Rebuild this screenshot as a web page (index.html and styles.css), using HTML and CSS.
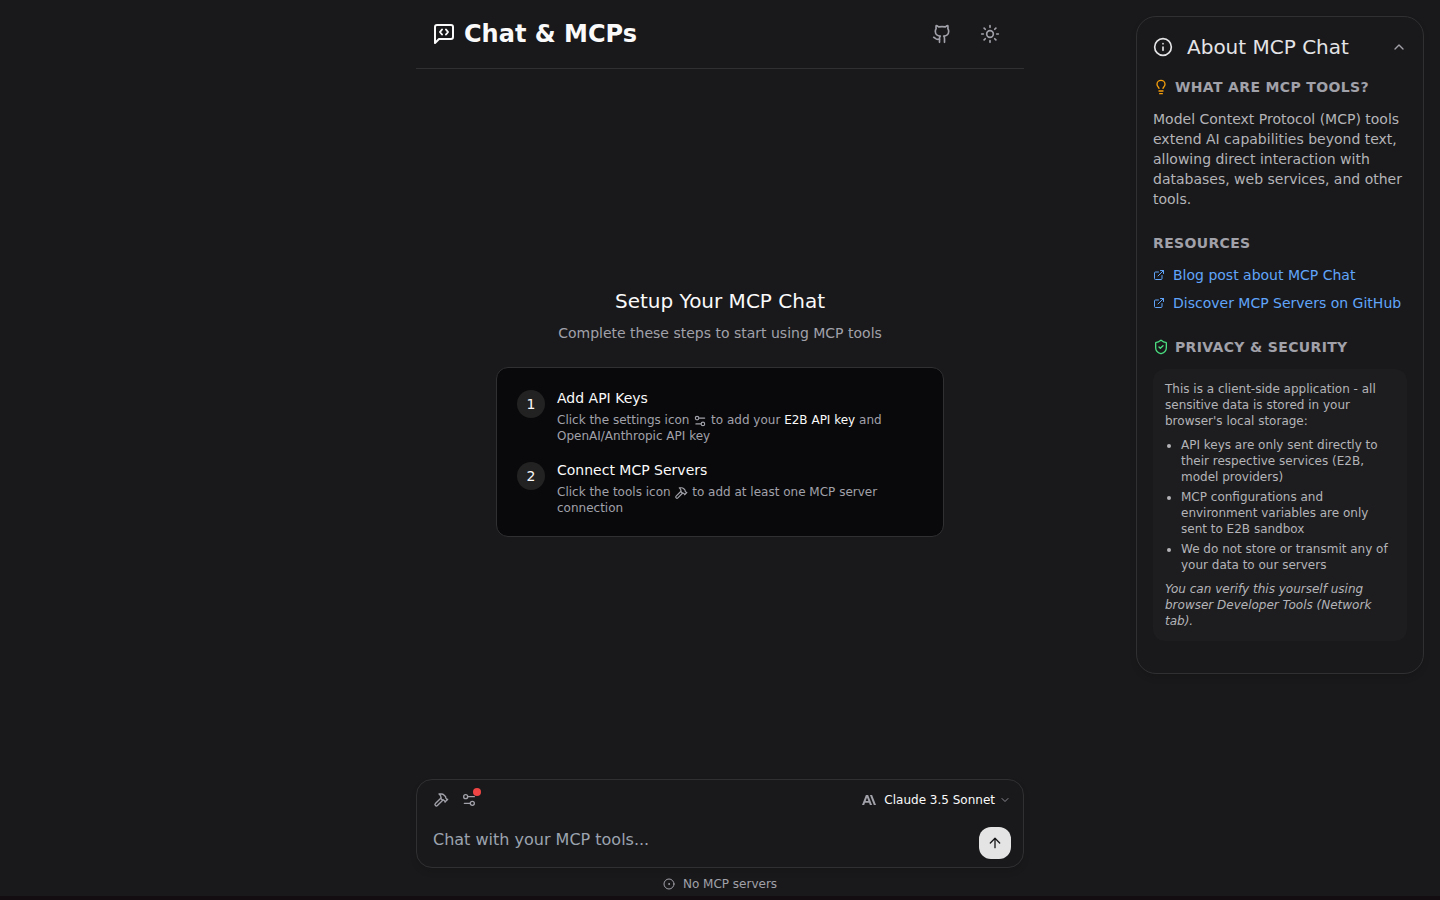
FILE: index.html
```html
<!DOCTYPE html>
<html lang="en">
<head>
<meta charset="utf-8">
<meta name="viewport" content="width=device-width, initial-scale=1">
<title>Chat &amp; MCPs</title>
<link rel="stylesheet" href="styles.css">
</head>
<body>
<svg class="sprite" aria-hidden="true">
  <symbol id="hammer" viewBox="0 0 24 24"><path d="m15 12-8.373 8.373a1 1 0 1 1-3-3L12 9"/><path d="m18 15 4-4"/><path d="m21.5 11.5-1.914-1.914A2 2 0 0 1 19 8.172V7l-2.26-2.26a6 6 0 0 0-4.202-1.756L9 2.96l.92.82A6.18 6.18 0 0 1 12 8.4V10l2 2h1.172a2 2 0 0 1 1.414.586L18.500 14.500"/></symbol>
  <symbol id="settings" viewBox="0 0 24 24"><path d="M20 7h-9"/><path d="M14 17H5"/><circle cx="17" cy="17" r="3"/><circle cx="7" cy="7" r="3"/></symbol>
  <symbol id="external" viewBox="0 0 24 24"><path d="M15 3h6v6"/><path d="M10 14 21 3"/><path d="M18 13v6a2 2 0 0 1-2 2H5a2 2 0 0 1-2-2V8a2 2 0 0 1 2-2h6"/></symbol>
</svg>
<div class="app">
  <main class="chat">
    <header class="topbar">
      <svg class="icon icon-brand" viewBox="0 0 24 24" aria-hidden="true"><path d="M10 7.500 8 10l2 2.500"/><path d="m14 7.500 2 2.500-2 2.500"/><path d="M21 15a2 2 0 0 1-2 2H7l-4 4V5a2 2 0 0 1 2-2h14a2 2 0 0 1 2 2z"/></svg>
      <h1 class="brand">Chat &amp; MCPs</h1>
      <nav class="actions">
        <a class="icon-button" href="#" aria-label="GitHub"><svg class="icon icon-md" viewBox="0 0 24 24"><path d="M15 22v-4a4.800 4.800 0 0 0-1-3.500c3 0 6-2 6-5.500.08-1.250-.27-2.480-1-3.500.28-1.150.28-2.350 0-3.500 0 0-1 0-3 1.500-2.640-.5-5.360-.5-8 0C6 2 5 2 5 2c-.3 1.150-.3 2.350 0 3.500A5.403 5.403 0 0 0 4 9c0 3.500 3 5.500 6 5.500-.39.49-.68 1.050-.85 1.650-.17.6-.22 1.230-.15 1.850v4"/><path d="M9 18c-4.510 2-5-2-7-2"/></svg></a>
        <button class="icon-button" type="button" aria-label="Toggle theme"><svg class="icon icon-md" viewBox="0 0 24 24"><circle cx="12" cy="12" r="4"/><path d="M12 2v2M12 20v2M4.930 4.930l1.410 1.410M17.660 17.660l1.410 1.410M2 12h2M20 12h2M6.340 17.660l-1.410 1.410M19.070 4.930l-1.410 1.410"/></svg></button>
      </nav>
    </header>

    <section class="setup">
      <h2 class="setup-title">Setup Your MCP Chat</h2>
      <p class="setup-lead">Complete these steps to start using MCP tools</p>
      <ol class="steps">
        <li class="step">
          <span class="step-number">1</span>
          <div class="step-body">
            <h3 class="step-title">Add API Keys</h3>
            <p class="step-text">Click the settings icon <svg class="icon icon-inline"><use href="#settings"/></svg> to add your <strong class="step-key">E2B API key</strong> and OpenAI/Anthropic API key</p>
          </div>
        </li>
        <li class="step">
          <span class="step-number">2</span>
          <div class="step-body">
            <h3 class="step-title">Connect MCP Servers</h3>
            <p class="step-text">Click the tools icon <svg class="icon icon-inline"><use href="#hammer"/></svg> to add at least one MCP server connection</p>
          </div>
        </li>
      </ol>
    </section>

    <form class="composer">
      <div class="composer-tools">
        <button class="tool" type="button" aria-label="Tools"><svg class="icon icon-sm"><use href="#hammer"/></svg></button>
        <button class="tool" type="button" aria-label="Settings"><svg class="icon icon-sm"><use href="#settings"/></svg><span class="alert-dot"></span></button>
        <button class="model" type="button">
          <svg class="logo" viewBox="0 0 24 24" aria-hidden="true"><path d="M17.304 3.541h-3.672l6.696 16.918H24Zm-10.608 0L0 20.459h3.744l1.370-3.553h7.005l1.369 3.553h3.744L10.536 3.541Zm-.371 10.223L8.616 7.820l2.291 5.944Z"/></svg>
          Claude 3.5 Sonnet
          <svg class="icon icon-chevron" viewBox="0 0 24 24" aria-hidden="true"><path d="m6 9 6 6 6-6"/></svg>
        </button>
      </div>
      <div class="composer-entry">
        <input class="message" type="text" aria-label="Message" placeholder="Chat with your MCP tools...">
        <button class="send" type="submit" aria-label="Send"><svg class="icon icon-sm" viewBox="0 0 24 24"><path d="m5 12 7-7 7 7"/><path d="M12 19V5"/></svg></button>
      </div>
    </form>
    <p class="status"><svg class="icon icon-xs" viewBox="0 0 24 24" aria-hidden="true"><circle cx="12" cy="12" r="10"/><circle cx="12" cy="12" r="1"/></svg>No MCP servers</p>
  </main>

  <aside class="about">
    <button class="about-toggle" type="button" aria-expanded="true">
      <svg class="icon icon-info" viewBox="0 0 24 24" aria-hidden="true"><circle cx="12" cy="12" r="10"/><path d="M12 16v-4M12 8h.01"/></svg>
      <span class="about-title">About MCP Chat</span>
      <svg class="icon icon-sm icon-muted" viewBox="0 0 24 24" aria-hidden="true"><path d="m18 15-6-6-6 6"/></svg>
    </button>
    <section class="about-section">
      <h3 class="about-heading"><svg class="icon icon-sm icon-amber" viewBox="0 0 24 24" aria-hidden="true"><path d="M15 14c.2-1 .7-1.700 1.500-2.500 1-.9 1.500-2.200 1.500-3.500A6 6 0 0 0 6 8c0 1 .2 2.200 1.500 3.500.7.7 1.300 1.500 1.500 2.500"/><path d="M9 18h6M10 22h4"/></svg>WHAT ARE MCP TOOLS?</h3>
      <p class="about-text">Model Context Protocol (MCP) tools extend AI capabilities beyond text, allowing direct interaction with databases, web services, and other tools.</p>
    </section>
    <section class="about-section">
      <h3 class="about-heading">RESOURCES</h3>
      <ul class="links">
        <li><a class="link" href="#"><svg class="icon icon-xs"><use href="#external"/></svg>Blog post about MCP Chat</a></li>
        <li><a class="link" href="#"><svg class="icon icon-xs"><use href="#external"/></svg>Discover MCP Servers on GitHub</a></li>
      </ul>
    </section>
    <section class="about-section">
      <h3 class="about-heading"><svg class="icon icon-sm icon-green" viewBox="0 0 24 24" aria-hidden="true"><path d="M20 13c0 5-3.500 7.500-7.660 8.950a1 1 0 0 1-.67-.01C7.500 20.500 4 18 4 13V6a1 1 0 0 1 1-1c2 0 4.500-1.200 6.240-2.720a1.170 1.170 0 0 1 1.520 0C14.510 3.810 17 5 19 5a1 1 0 0 1 1 1z"/><path d="m9 12 2 2 4-4"/></svg>PRIVACY &amp; SECURITY</h3>
      <div class="privacy">
        <p>This is a client-side application - all sensitive data is stored in your browser's local storage:</p>
        <ul class="privacy-list">
          <li>API keys are only sent directly to their respective services (E2B, model providers)</li>
          <li>MCP configurations and environment variables are only sent to E2B sandbox</li>
          <li>We do not store or transmit any of your data to our servers</li>
        </ul>
        <p><em>You can verify this yourself using browser Developer Tools (Network tab).</em></p>
      </div>
    </section>
  </aside>
</div>
</body>
</html>
```
FILE: styles.css
```css
* {
  box-sizing: border-box;
  margin: 0;
  padding: 0;
}

body {
  background: #19191b;
  color: #fafafa;
  font: 14px/20px "DejaVu Sans", sans-serif;
}

button, input {
  border: 0;
  background: none;
  color: inherit;
  font: inherit;
}

a {
  color: inherit;
  text-decoration: none;
}

ul, ol { list-style: none; }

.sprite {
  position: absolute;
  width: 0;
  height: 0;
}

.app {
  display: grid;
  grid-template-columns: 1fr minmax(0, 608px) 1fr;
  min-height: 100vh;
  border-bottom: 4px solid #130c10;
}

.chat {
  grid-column: 2;
  display: flex;
  flex-direction: column;
}

.icon {
  flex: none;
  fill: none;
  stroke: currentColor;
  stroke-width: 2;
  stroke-linecap: round;
  stroke-linejoin: round;
}

.icon-brand { width: 24px; height: 24px; }
.icon-md { width: 20px; height: 20px; }
.icon-info { width: 20px; height: 20px; }
.icon-sm { width: 16px; height: 16px; }
.icon-xs { width: 12px; height: 12px; }
.icon-chevron { width: 12px; height: 12px; color: #8a8a90; }
.icon-inline { width: 14px; height: 14px; vertical-align: -4px; }
.icon-muted { color: #a1a1aa; }
.icon-amber { color: #f59e0b; }
.icon-green { color: #4ade80; }

.topbar {
  display: flex;
  align-items: center;
  gap: 8px;
  padding: 16px;
  border-bottom: 1px solid #303032;
}

.brand { font-size: 24px; line-height: 36px; }

.actions {
  display: flex;
  gap: 12px;
  margin-left: auto;
}

.icon-button {
  display: grid;
  place-items: center;
  width: 36px;
  height: 36px;
  color: #a1a1aa;
}

.setup {
  flex: 1;
  display: flex;
  flex-direction: column;
  align-items: center;
  justify-content: center;
  padding-bottom: 24px;
}

.setup-title {
  margin-bottom: 8px;
  font-size: 20px;
  font-weight: 400;
  line-height: 28px;
}

.setup-lead { margin-bottom: 24px; color: #a1a1aa; }

.steps {
  display: grid;
  gap: 16px;
  width: 100%;
  max-width: 448px;
  padding: 20px;
  border: 1px solid #303032;
  border-radius: 12px;
  background: #09090b;
}

.step { display: flex; gap: 12px; }

.step-number {
  display: grid;
  flex: none;
  place-items: center;
  width: 28px;
  height: 28px;
  margin-top: 2px;
  border-radius: 50%;
  background: #222222;
}

.step-title { margin-bottom: 4px; font-size: 14px; font-weight: 400; }

.step-text { color: #a1a1aa; font-size: 12px; line-height: 16px; }

.step-key { color: #fafafa; font-weight: 400; }

.composer {
  border: 1px solid #303032;
  border-radius: 16px;
  box-shadow: 0 4px 6px rgba(0, 0, 0, 0.1);
}

.composer-tools {
  display: flex;
  align-items: center;
  gap: 4px;
  padding: 8px 12px 4px;
}

.tool {
  position: relative;
  display: grid;
  place-items: center;
  width: 24px;
  height: 24px;
  color: #a1a1aa;
}

.alert-dot {
  position: absolute;
  top: 0;
  right: 0;
  width: 8px;
  height: 8px;
  border-radius: 50%;
  background: #ef4444;
}

.model {
  display: flex;
  align-items: center;
  gap: 4px;
  margin-left: auto;
  font-size: 12px;
  line-height: 16px;
}

.logo { width: 14px; height: 14px; margin-right: 4px; fill: #a1a1aa; }

.composer-entry {
  display: flex;
  align-items: flex-end;
  padding: 0 12px 8px 16px;
}

.message {
  flex: 1;
  min-width: 0;
  height: 43px;
  padding-top: 4px;
  font-size: 16px;
  line-height: 24px;
  outline: 0;
}

.message::placeholder { color: #9ca3af; opacity: 1; }

.send {
  display: grid;
  place-items: center;
  width: 32px;
  height: 32px;
  border-radius: 12px;
  background: #e4e4e4;
  color: #19191b;
}

.status {
  display: flex;
  align-items: center;
  justify-content: center;
  gap: 8px;
  padding: 8px 0 4px;
  color: #a1a1aa;
  font-size: 12px;
  line-height: 16px;
}

.about {
  align-self: start;
  justify-self: end;
  width: 288px;
  margin: 16px 16px 0 0;
  padding: 16px 16px 32px;
  border: 1px solid #303032;
  border-radius: 20px;
  box-shadow: 0 4px 6px rgba(0, 0, 0, 0.1);
}

.about-toggle {
  display: flex;
  align-items: center;
  width: 100%;
  margin-bottom: 16px;
  color: #e4e4e7;
  text-align: left;
}

.about-title {
  flex: 1;
  padding-left: 14px;
  font-size: 20px;
  line-height: 28px;
}

.about-section + .about-section { margin-top: 24px; }

.about-heading {
  display: flex;
  align-items: center;
  gap: 6px;
  margin-bottom: 12px;
  color: #a1a1aa;
  font-size: 14px;
  font-weight: 700;
  letter-spacing: 0.025em;
}

.about-text { color: #b4b4b8; }

.links { display: grid; gap: 8px; }

.link {
  display: flex;
  align-items: center;
  gap: 8px;
  color: #60a5fa;
  white-space: nowrap;
}

.privacy {
  display: grid;
  gap: 8px;
  padding: 12px;
  border-radius: 12px;
  background: #1d1d1f;
  color: #b4b4b8;
  font-size: 12px;
  line-height: 16px;
}

.privacy-list {
  display: grid;
  gap: 4px;
  padding-left: 16px;
  list-style: disc;
}
```
